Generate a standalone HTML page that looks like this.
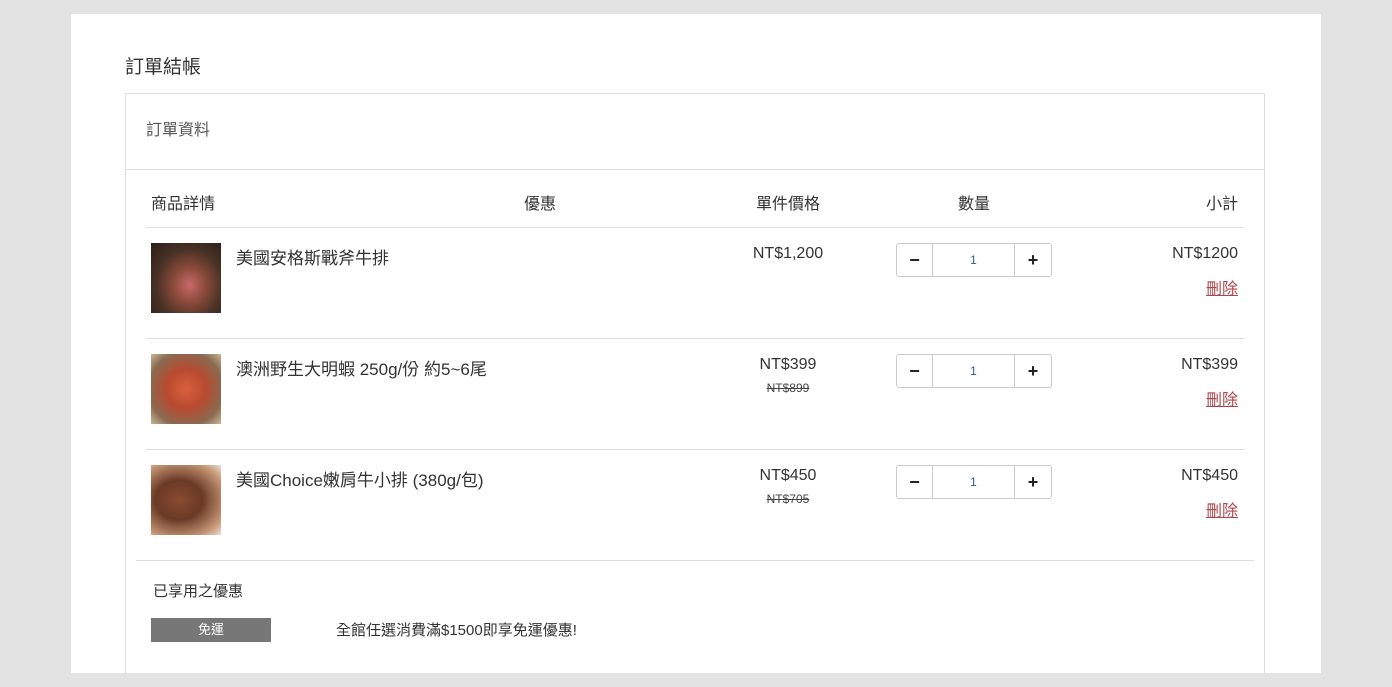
<!DOCTYPE html>
<html><head><meta charset="utf-8"><style>
*{margin:0;padding:0;box-sizing:border-box}
html,body{width:1392px;height:687px;overflow:hidden}
body{background:#e3e3e3;font-family:"Liberation Sans","Noto Sans CJK TC",sans-serif;color:#333;position:relative}
.a{position:absolute;white-space:nowrap}
.panel{position:absolute;left:71px;top:14px;width:1250px;height:659px;background:#fff}
.box{position:absolute;left:125px;top:93px;width:1140px;height:580px;border:1px solid #ddd;border-bottom:none;background:#fff}
.hl{position:absolute;height:1px;background:#ddd}
.img{position:absolute;width:70px;height:70px}
.qty{position:absolute;left:896px;width:156px;height:34px;border:1px solid #ccc;border-radius:3px;display:flex}
.qty div{display:flex;align-items:center;justify-content:center;font-weight:bold;font-size:18px;color:#222}
.qty .m{width:36px;border-right:1px solid #ccc}
.qty .i{flex:1;font-weight:normal;font-size:12px;color:#2a5a9a;border-right:1px solid #ccc}
.qty .p{width:36px}
.c{text-align:center;width:120px;margin-left:-60px}
.r{text-align:right;right:154px}
.del{color:#b0454a;text-decoration:underline;font-size:16px}
.s{font-size:12px;text-decoration:line-through;color:#444}
</style></head><body>
<div class="panel"></div>
<div class="a" style="left:125px;top:52px;font-size:19px;color:#333">訂單結帳</div>
<div class="box"></div>
<div class="a" style="left:146px;top:116px;font-size:16px;color:#555">訂單資料</div>
<div class="hl" style="left:126px;top:169px;width:1138px"></div>
<div class="a" style="left:151px;top:190px;font-size:16px">商品詳情</div>
<div class="a" style="left:524px;top:190px;font-size:16px">優惠</div>
<div class="a" style="left:756px;top:190px;font-size:16px">單件價格</div>
<div class="a" style="left:958px;top:190px;font-size:16px">數量</div>
<div class="a" style="left:1206px;top:190px;font-size:16px">小計</div>
<div class="hl" style="left:146px;top:227px;width:1098px"></div>

<div class="img" style="left:151px;top:243px;background:radial-gradient(ellipse at 55% 60%,#c86a6a 0,#8a4a3a 30%,#4a3226 60%,#2a1d17 100%)"></div>
<div class="a" style="left:236px;top:244px;font-size:17px">美國安格斯戰斧牛排</div>
<div class="a c" style="left:788px;top:245px;font-size:16px">NT$1,200</div>
<div class="qty" style="top:243px"><div class="m">−</div><div class="i">1</div><div class="p">+</div></div>
<div class="a r" style="top:245px;font-size:16px">NT$1200</div>
<div class="a r del" style="top:275px">刪除</div>
<div class="hl" style="left:146px;top:338px;width:1098px"></div>

<div class="img" style="left:151px;top:354px;background:radial-gradient(ellipse at 50% 50%,#d9603e 0,#b84a30 40%,#8a6a50 75%,#c8b898 100%)"></div>
<div class="a" style="left:236px;top:355px;font-size:17px">澳洲野生大明蝦 250g/份 約5~6尾</div>
<div class="a c" style="left:788px;top:356px;font-size:16px">NT$399</div>
<div class="a c s" style="left:788px;top:381px">NT$899</div>
<div class="qty" style="top:354px"><div class="m">−</div><div class="i">1</div><div class="p">+</div></div>
<div class="a r" style="top:356px;font-size:16px">NT$399</div>
<div class="a r del" style="top:386px">刪除</div>
<div class="hl" style="left:146px;top:449px;width:1098px"></div>

<div class="img" style="left:151px;top:465px;background:radial-gradient(ellipse at 40% 50%,#8a4a30 0,#6a3a26 40%,#c89878 80%,#e8e0d8 100%)"></div>
<div class="a" style="left:236px;top:466px;font-size:17px">美國Choice嫩肩牛小排 (380g/包)</div>
<div class="a c" style="left:788px;top:467px;font-size:16px">NT$450</div>
<div class="a c s" style="left:788px;top:492px">NT$705</div>
<div class="qty" style="top:465px"><div class="m">−</div><div class="i">1</div><div class="p">+</div></div>
<div class="a r" style="top:467px;font-size:16px">NT$450</div>
<div class="a r del" style="top:497px">刪除</div>
<div class="hl" style="left:136px;top:560px;width:1118px"></div>

<div class="a" style="left:153px;top:580px;font-size:15px">已享用之優惠</div>
<div class="a" style="left:151px;top:618px;width:120px;height:24px;background:#777;color:#fff;font-size:13px;text-align:center;line-height:24px">免運</div>
<div class="a" style="left:336px;top:619px;font-size:15px">全館任選消費滿$1500即享免運優惠!</div>
<div class="a" style="left:0;top:673px;width:1392px;height:14px;background:#e3e3e3"></div>
</body></html>
